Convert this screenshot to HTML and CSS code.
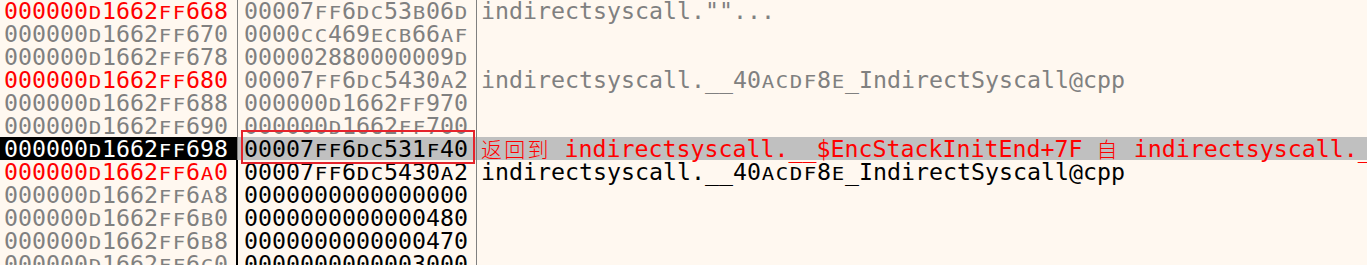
FILE: index.html
```html
<!DOCTYPE html>
<html>
<head>
<meta charset="utf-8">
<link rel="stylesheet" href="styles.css">
</head>
<body>
<div class="stack">
  <div class="row">
    <div class="addr red">000000<i class="h">D</i>1662<i class="h">F</i><i class="h">F</i>668</div>
    <div class="val gray">00007<i class="h">F</i><i class="h">F</i>6<i class="h">D</i><i class="h">C</i>53<i class="h">B</i>06<i class="h">D</i></div>
    <div class="cmt gray">indirectsyscall.""...</div>
  </div>
  <div class="row">
    <div class="addr gray">000000<i class="h">D</i>1662<i class="h">F</i><i class="h">F</i>670</div>
    <div class="val gray">0000<i class="h">C</i><i class="h">C</i>469<i class="h">E</i><i class="h">C</i><i class="h">B</i>66<i class="h">A</i><i class="h">F</i></div>
    <div class="cmt"></div>
  </div>
  <div class="row">
    <div class="addr gray">000000<i class="h">D</i>1662<i class="h">F</i><i class="h">F</i>678</div>
    <div class="val gray">000002880000009<i class="h">D</i></div>
    <div class="cmt"></div>
  </div>
  <div class="row">
    <div class="addr red">000000<i class="h">D</i>1662<i class="h">F</i><i class="h">F</i>680</div>
    <div class="val gray">00007<i class="h">F</i><i class="h">F</i>6<i class="h">D</i><i class="h">C</i>5430<i class="h">A</i>2</div>
    <div class="cmt gray">indirectsyscall.__40<i class="h">A</i><i class="h">C</i><i class="h">D</i><i class="h">F</i>8<i class="h">E</i>_IndirectSyscall@cpp</div>
  </div>
  <div class="row">
    <div class="addr gray">000000<i class="h">D</i>1662<i class="h">F</i><i class="h">F</i>688</div>
    <div class="val gray">000000<i class="h">D</i>1662<i class="h">F</i><i class="h">F</i>970</div>
    <div class="cmt"></div>
  </div>
  <div class="row">
    <div class="addr gray">000000<i class="h">D</i>1662<i class="h">F</i><i class="h">F</i>690</div>
    <div class="val gray">000000<i class="h">D</i>1662<i class="h">F</i><i class="h">F</i>700</div>
    <div class="cmt"></div>
  </div>
  <div class="row sel">
    <div class="addr">000000<i class="h">D</i>1662<i class="h">F</i><i class="h">F</i>698</div>
    <div class="val blk">00007<i class="h">F</i><i class="h">F</i>6<i class="h">D</i><i class="h">C</i>531<i class="h">F</i>40</div>
    <div class="cmt red"><span class="cjk">返回到</span> indirectsyscall.__$EncStackInitEnd+7F <span class="cjk">自</span> indirectsyscall.__40<i class="h">A</i><i class="h">C</i><i class="h">D</i><i class="h">F</i>8<i class="h">E</i>_IndirectSyscall@cpp</div>
  </div>
  <div class="row frame">
    <div class="addr red">000000<i class="h">D</i>1662<i class="h">F</i><i class="h">F</i>6<i class="h">A</i>0</div>
    <div class="val blk">00007<i class="h">F</i><i class="h">F</i>6<i class="h">D</i><i class="h">C</i>5430<i class="h">A</i>2</div>
    <div class="cmt blk">indirectsyscall.__40<i class="h">A</i><i class="h">C</i><i class="h">D</i><i class="h">F</i>8<i class="h">E</i>_IndirectSyscall@cpp</div>
  </div>
  <div class="row frame">
    <div class="addr gray">000000<i class="h">D</i>1662<i class="h">F</i><i class="h">F</i>6<i class="h">A</i>8</div>
    <div class="val blk">0000000000000000</div>
    <div class="cmt"></div>
  </div>
  <div class="row frame">
    <div class="addr gray">000000<i class="h">D</i>1662<i class="h">F</i><i class="h">F</i>6<i class="h">B</i>0</div>
    <div class="val blk">0000000000000480</div>
    <div class="cmt"></div>
  </div>
  <div class="row frame">
    <div class="addr gray">000000<i class="h">D</i>1662<i class="h">F</i><i class="h">F</i>6<i class="h">B</i>8</div>
    <div class="val blk">0000000000000470</div>
    <div class="cmt"></div>
  </div>
  <div class="row frame">
    <div class="addr gray">000000<i class="h">D</i>1662<i class="h">F</i><i class="h">F</i>6<i class="h">C</i>0</div>
    <div class="val blk">0000000000003000</div>
    <div class="cmt"></div>
  </div>
  <div class="mark"></div>
</div>
</body>
</html>
```

FILE: styles.css
```css
html, body {
  margin: 0;
  padding: 0;
}
body {
  background: #fff8f0;
  width: 1367px;
  height: 265px;
  overflow: hidden;
  font-family: "DejaVu Sans Mono", monospace;
  font-size: 23.25px;
  line-height: 23px;
}
.stack {
  position: relative;
  margin-top: -1px;
}
.row {
  display: flex;
  height: 23px;
  white-space: nowrap;
}
.addr {
  flex: none;
  width: 238px;
  box-sizing: border-box;
  border-right: 1px solid #808080;
  padding-left: 4px;
}
.val {
  flex: none;
  width: 239px;
  box-sizing: border-box;
  border-right: 1px solid #808080;
  padding-left: 6px;
}
.cmt {
  flex: 1;
  min-width: 0;
  padding-left: 4px;
  overflow-x: clip;
  overflow-y: visible;
}
.h {
  display: inline-block;
  width: 14px;
  text-align: center;
  font-style: normal;
  font-size: 17px;
  transform: scaleX(1.22);
}
.cjk {
  font-family: "Noto Sans CJK SC", sans-serif;
  font-size: 21px;
  letter-spacing: 2.2px;
  font-weight: 300;
}
.red { color: #ff0000; }
.gray { color: #808080; }
.blk { color: #000000; }
.sel .addr {
  background: #000000;
  color: #ffffff;
}
.sel .val,
.sel .cmt {
  background: #c0c0c0;
}
.frame .addr {
  border-right: 2px solid #000000;
}
.mark {
  position: absolute;
  left: 241px;
  top: 131px;
  width: 234px;
  height: 34px;
  box-sizing: border-box;
  border: 2px solid #e5232b;
}
```
